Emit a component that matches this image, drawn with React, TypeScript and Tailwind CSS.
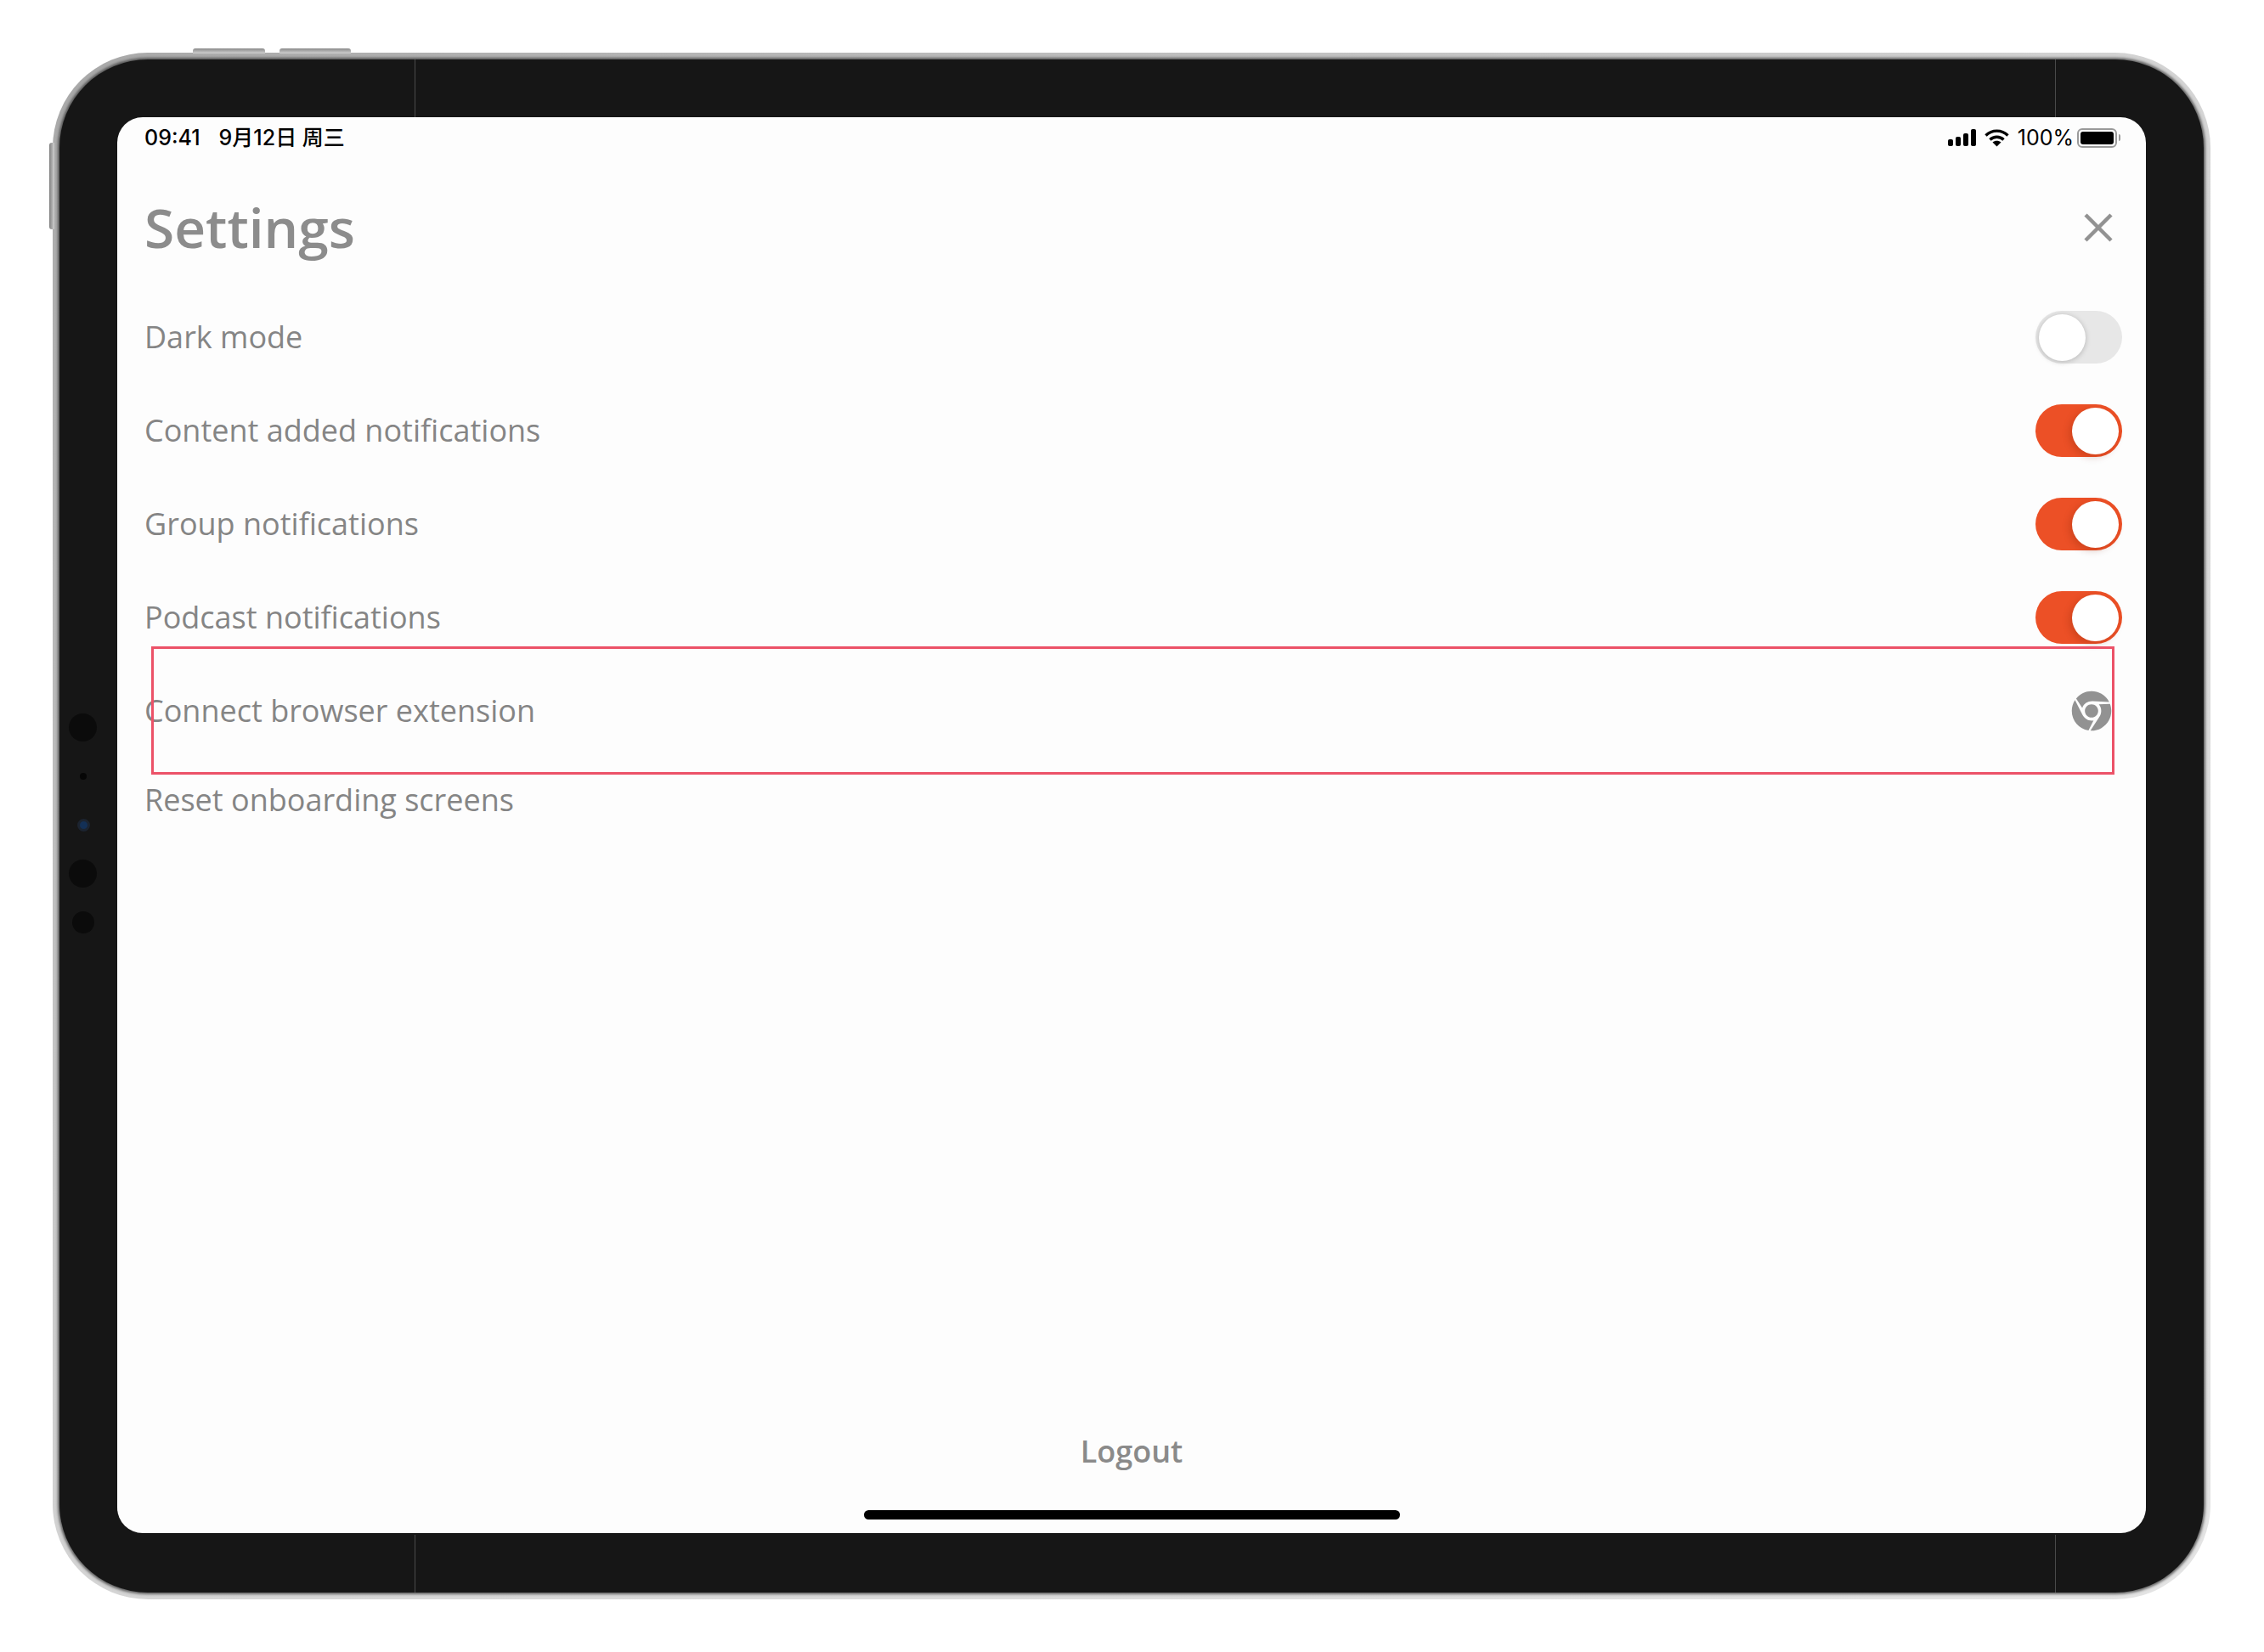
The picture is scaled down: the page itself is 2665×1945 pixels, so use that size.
import { X } from 'lucide-react';
import { FaChrome } from 'react-icons/fa';

const rows = [
  { label: 'Dark mode', on: false },
  { label: 'Content added notifications', on: true },
  { label: 'Group notifications', on: true },
  { label: 'Podcast notifications', on: true },
];

const Toggle = ({ on }: { on: boolean }) => (
  <div
    className={`flex h-[62px] w-[102px] items-center rounded-full px-[4px] ${
      on ? 'justify-end bg-[#ec5026]' : 'justify-start bg-[#e7e7e7]'
    }`}
  >
    <div
      className={`h-[55px] w-[55px] rounded-full bg-white ${
        on ? 'shadow-[-3px_3px_8px_rgba(120,30,0,0.25)]' : 'shadow-[0_1px_6px_rgba(0,0,0,0.22)]'
      }`}
    />
  </div>
);

const Signal = () => (
  <svg width="33" height="20" viewBox="0 0 33 20" fill="black">
    <rect x="0" y="12" width="6" height="8" rx="2" />
    <rect x="9" y="9" width="6" height="11" rx="2" />
    <rect x="18" y="5" width="6" height="15" rx="2" />
    <rect x="27" y="0" width="6" height="20" rx="2" />
  </svg>
);

const Wifi = () => (
  <svg width="29" height="21" viewBox="0 0 29 21" fill="none" stroke="black" strokeWidth="3.4">
    <path d="M1.5 7.5C9 .3 20 .3 27.5 7.5" />
    <path d="M6.5 12.5C11 8.2 18 8.2 22.5 12.5" />
    <path d="M14.5 20.5L9.5 15.6C12.4 13.2 16.6 13.2 19.5 15.6Z" fill="black" stroke="none" />
  </svg>
);

const Battery = () => (
  <div className="-ml-[6px] flex items-center gap-[2px]">
    <div className="flex h-[23px] w-[47px] rounded-[6px] border-2 border-[#9a9a9a] p-[2px]">
      <div className="flex-1 rounded-[3px] bg-black" />
    </div>
    <div className="h-[8px] w-[2px] rounded-r-full bg-[#9a9a9a]" />
  </div>
);

const Sensor = ({ className }: { className: string }) => (
  <div className={`absolute rounded-full ${className}`} />
);

export default function App() {
  return (
    <div className="relative h-[1945px] w-[2665px] overflow-hidden bg-white pl-[62px] pt-[62px] font-['Open_Sans',sans-serif]">
      {/* side buttons */}
      <div className="absolute left-[227px] top-[57px] h-[6px] w-[85px] rounded-t-[3px] bg-gradient-to-b from-[#8a8a8a] to-[#d0d0d0]" />
      <div className="absolute left-[329px] top-[57px] h-[6px] w-[84px] rounded-t-[3px] bg-gradient-to-b from-[#8a8a8a] to-[#d0d0d0]" />
      <div className="absolute left-[58px] top-[168px] h-[102px] w-[6px] rounded-l-[3px] bg-gradient-to-r from-[#808080] to-[#d0d0d0]" />

      {/* device shell */}
      <div className="h-[1821px] w-[2540px] rounded-[112px] bg-gradient-to-br from-[#a8a8a8] via-[#d4d4d4] to-[#e4e4e4] p-[8px]">
        <div className="relative h-full w-full rounded-[104px] bg-[#161616] pb-[70px] pl-[68px] pr-[68px] pt-[68px] shadow-[0_0_3px_2px_rgba(60,60,60,0.75)]">
          <div className="absolute left-[418px] top-0 h-[68px] w-px bg-[#4a4a4a]" />
          <div className="absolute left-[2349px] top-0 h-[68px] w-px bg-[#4a4a4a]" />
          <div className="absolute bottom-0 left-[418px] h-[68px] w-px bg-[#4a4a4a]" />
          <div className="absolute bottom-0 left-[2349px] h-[68px] w-px bg-[#4a4a4a]" />

          {/* front sensors */}
          <Sensor className="left-[11px] top-[770px] h-[33px] w-[33px] bg-[#0b0b0b]" />
          <Sensor className="left-[24px] top-[840px] h-[8px] w-[8px] bg-[#060606]" />
          <Sensor className="left-[21px] top-[894px] h-[15px] w-[15px] border-[3px] border-[#1c2430] bg-[#133056]" />
          <Sensor className="left-[11px] top-[942px] h-[33px] w-[33px] bg-[#0b0b0b]" />
          <Sensor className="left-[15px] top-[1003px] h-[26px] w-[26px] bg-[#0b0b0b]" />

          {/* screen */}
          <div className="relative flex h-full w-full flex-col rounded-[30px] bg-[#fdfdfd] pl-[32px] pr-[28px]">
            <div className="flex h-[48px] items-center justify-between pr-[2px] font-['Inter','Noto_Sans_CJK_SC',sans-serif] text-[25px] font-medium leading-none text-black">
              <div className="flex gap-[22px]">
                <span>09:41</span>
                <span>9月12日 周三</span>
              </div>
              <div className="flex items-center gap-[10px]">
                <Signal />
                <Wifi />
                <span className="font-normal">100%</span>
                <Battery />
              </div>
            </div>

            <div className="flex h-[156px] items-center justify-between pt-[7px]">
              <h1 className="text-[64px] font-semibold leading-none text-[#8c8c8c]">Settings</h1>
              <X size={60} strokeWidth={1.8} strokeLinecap="butt" className="-mr-[2px] text-[#929292]" />
            </div>

            {rows.map((row) => (
              <div key={row.label} className="flex h-[110px] items-center justify-between">
                <span className="text-[36px] text-[#858585]">{row.label}</span>
                <Toggle on={row.on} />
              </div>
            ))}

            <div className="flex h-[110px] items-center justify-between pr-[12px]">
              <span className="text-[36px] text-[#858585]">Connect browser extension</span>
              <FaChrome size={48} className="text-[#929292]" />
            </div>
            <div className="flex h-[100px] items-center">
              <span className="text-[36px] text-[#858585]">Reset onboarding screens</span>
            </div>

            <div className="mt-auto flex flex-col items-center pb-[16px] pr-[4px]">
              <span className="text-[36px] font-semibold leading-none text-[#8a8a8a]">Logout</span>
              <div className="mt-[51px] h-[11px] w-[631px] rounded-full bg-black" />
            </div>

            {/* highlight box drawn over the row */}
            <div className="absolute left-[40px] top-[623px] h-[151px] w-[2311px] border-[3px] border-[#ec5268]" />
          </div>
        </div>
      </div>
    </div>
  );
}
